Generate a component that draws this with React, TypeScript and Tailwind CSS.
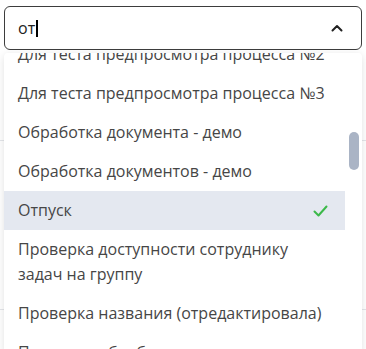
import { useEffect, useRef } from "react";

const items = [
  { label: "Для теста предпросмотра процесса №2" },
  { label: "Для теста предпросмотра процесса №3" },
  { label: "Обработка документа - демо" },
  { label: "Обработка документов - демо" },
  { label: "Отпуск", selected: true },
  { label: "Проверка доступности сотруднику задач на группу" },
  { label: "Проверка названия (отредактировала)" },
  { label: "Проверка обработки заявки" },
];

function ChevronUp() {
  return (
    <svg width="12" height="8" viewBox="0 0 12 8" fill="none">
      <path d="M1.5 6.5L6 2l4.5 4.5" stroke="#222" strokeWidth="2" strokeLinecap="round" strokeLinejoin="round" />
    </svg>
  );
}

function Check() {
  return (
    <svg width="15" height="12" viewBox="0 0 15 12" fill="none">
      <path d="M1.5 6.5l4 4L13.5 1.5" stroke="#3cb94a" strokeWidth="2" strokeLinecap="round" strokeLinejoin="round" />
    </svg>
  );
}

export default function App() {
  const listRef = useRef<HTMLDivElement>(null);
  useEffect(() => {
    if (listRef.current) listRef.current.scrollTop = 18;
  }, []);

  return (
    <div
      className="relative w-[366px] h-[349px] overflow-hidden bg-white text-[#464646]"
      style={{ fontFamily: '"Open Sans", "Liberation Sans", sans-serif' }}
    >
      {/* page behind the menu */}
      <div className="absolute inset-0 flex flex-col">
        <div className="h-[141px] border-b border-[#e4e6ea]" />
        <div className="h-[169px] border-b border-[#e4e6ea]" />
      </div>

      <div className="relative px-[4px] pt-[6px]">
        <div className="flex items-center h-[44px] rounded-[6px] border border-[#3d3d3d] bg-white pl-[13px] pr-[18px]">
          <div className="flex items-center flex-1 text-[16px] text-[#222]">
            от
            <span className="inline-block w-[2px] h-[17px] bg-black ml-[1px]" />
          </div>
          <ChevronUp />
        </div>

        <div className="mt-[3px] flex bg-white rounded-[4px] shadow-[0_2px_8px_rgba(0,0,0,0.12)] h-[300px] overflow-hidden">
          <div ref={listRef} className="flex-1 overflow-hidden">
            <div className="flex flex-col">
              {items.map((it) => (
                <div
                  key={it.label}
                  className={`flex items-center justify-between pl-[14px] pr-[17px] py-[7px] text-[16px] leading-[25px] ${
                    it.selected ? "bg-[#e4e8f0]" : ""
                  }`}
                >
                  <span>{it.label}</span>
                  {it.selected && <Check />}
                </div>
              ))}
            </div>
          </div>
          <div className="w-[17px] pt-[79px] flex justify-center">
            <div className="w-[10px] h-[38px] rounded-full bg-[#aab4c5]" />
          </div>
        </div>
      </div>
    </div>
  );
}
